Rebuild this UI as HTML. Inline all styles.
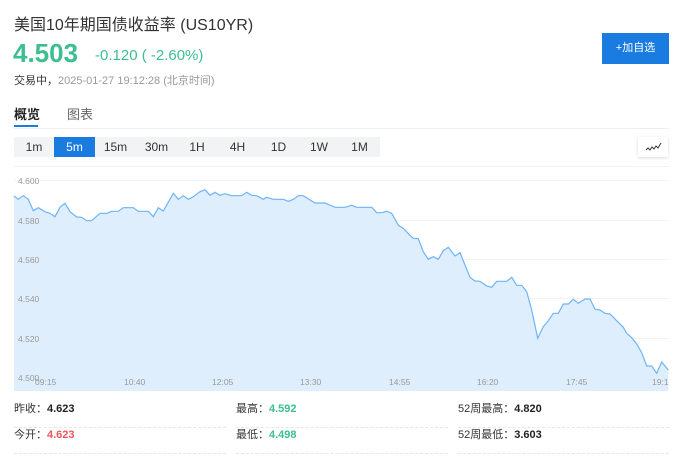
<!DOCTYPE html>
<html><head><meta charset="utf-8"><style>
*{margin:0;padding:0;box-sizing:border-box}
body{width:680px;height:459px;background:#fff;font-family:"Liberation Sans","Noto Sans CJK SC",sans-serif;position:relative;overflow:hidden;color:#333}
.a{position:absolute;white-space:nowrap}
.tb{position:absolute;top:137px;height:20px;font-size:12px;line-height:20px;text-align:center;color:#333}
.st{position:absolute;font-size:11px;height:26px;line-height:14px;border-bottom:1px dashed #e6e6e6}
.st b{color:#222}
</style></head><body>
<div class="a" style="left:14px;top:11px;font-size:16px;color:#333">美国10年期国债收益率 (US10YR)</div>
<div class="a" style="left:13px;top:38px;font-size:26px;font-weight:bold;color:#3bbf8f;line-height:30px">4.503</div>
<div class="a" style="left:95px;top:47px;font-size:15px;color:#3bbf8f">-0.120 ( -2.60%)</div>
<div class="a" style="left:14px;top:72px;font-size:11px;color:#999"><span style="color:#333">交易中，</span>2025-01-27 19:12:28 (北京时间)</div>
<div class="a" style="left:602px;top:33px;width:67px;height:31px;background:#1a7be0;color:#fff;font-size:11px;line-height:31px;text-align:center">+加自选</div>
<div class="a" style="left:14px;top:104px;font-size:13px;font-weight:bold;color:#222">概览</div>
<div class="a" style="left:67px;top:104px;font-size:13px;color:#666">图表</div>
<div class="a" style="left:14px;top:125px;width:24px;height:2px;background:#1a7be0"></div>
<div class="a" style="left:14px;top:128px;width:655px;height:1px;background:#eee"></div>
<div class="a" style="left:14px;top:137px;width:366px;height:20px;background:#f2f3f5"></div>
<div class="tb" style="left:14px;width:40px">1m</div>
<div class="tb" style="left:54px;width:41px;background:#1a7be0;color:#fff">5m</div>
<div class="tb" style="left:95px;width:41px">15m</div>
<div class="tb" style="left:136px;width:41px">30m</div>
<div class="tb" style="left:177px;width:40px">1H</div>
<div class="tb" style="left:217px;width:41px">4H</div>
<div class="tb" style="left:258px;width:41px">1D</div>
<div class="tb" style="left:299px;width:40px">1W</div>
<div class="tb" style="left:339px;width:41px">1M</div>
<div class="a" style="left:638px;top:137px;width:30px;height:20px;background:#fff;box-shadow:0 1px 3px rgba(0,0,0,.15)">
<svg width="30" height="20"><path d="M8 13 L10 11 L12 13 L14 10 L16 12 L18 9 L20 11 L23 6" fill="none" stroke="#333" stroke-width="1"/></svg></div>
<div class="a" style="left:14px;top:166px;width:655px;height:1px;background:#f0f0f0"></div>
<svg class="a" style="left:0;top:0" width="680" height="459">
<g stroke="#f3f3f3" stroke-width="1">
<line x1="14" y1="180.5" x2="669" y2="180.5"/><line x1="14" y1="220.5" x2="669" y2="220.5"/><line x1="14" y1="259.5" x2="669" y2="259.5"/><line x1="14" y1="298.5" x2="669" y2="298.5"/><line x1="14" y1="338.5" x2="669" y2="338.5"/>
</g>
<path d="M14 196 L18.3 199.3 L23.3 195.7 L28.3 199.3 L33.3 210.7 L38.3 207.7 L45 211.7 L50 213.3 L55 216.7 L60 207.3 L65 203.3 L70 211.7 L76.7 217 L81.7 217.3 L86.7 220.7 L91.7 220.7 L100 213.3 L106.7 213.3 L111.7 211.3 L118.3 211.3 L123.3 207.7 L133.3 207.7 L138.3 211.3 L148.3 211.3 L153.3 216.7 L158.3 207.7 L163.3 211 L173.3 193.3 L178.3 199.3 L183.3 195.7 L188.3 199.3 L193.3 196.7 L200 191.7 L205 189.7 L210 195.3 L215 192.3 L220 195.3 L225 193.7 L231.7 195.7 L241.7 195.7 L246.7 192.3 L251.7 195.3 L256.7 195.7 L263.3 199.3 L266.7 197.3 L273.3 199.3 L283.3 199.3 L288.3 201.3 L293.3 199.3 L298.3 195.7 L303.3 195.7 L315 203 L325 203 L335 207.3 L345 207.3 L351.7 205.3 L356.7 207.3 L371.7 207.3 L376.7 212.7 L381.7 212.7 L386.7 211.3 L391.7 213.3 L398.3 225.3 L403.3 228.3 L410 235.3 L413.3 238.3 L418.3 238.7 L423.3 251.7 L428.3 259.3 L433.3 256.7 L438.3 259.3 L443.3 250.7 L448.3 247.3 L455 256 L460 252.7 L465 265 L470 277.3 L475 281 L480 281.3 L486.7 286 L491.7 287.3 L496.7 281.3 L506.7 281.3 L511.7 277.3 L516.7 285.3 L521.7 285.3 L526.7 291.7 L531.7 310 L537.7 338.3 L543.3 326.7 L548.3 320.7 L553.3 313.3 L558.3 313.3 L563.3 304 L568.3 304 L573.3 299.3 L578.3 303.3 L585 299 L590 299 L595 309.3 L600 310 L605 313.3 L610 314 L616.7 320.7 L623.3 327.3 L626.7 333.3 L631.7 337.7 L636.7 344 L641.7 352.7 L646.7 366 L651.7 366 L656.7 373.3 L661.7 362 L668.3 370 L668.3 391 L14 391 Z" fill="#deeefd" stroke="none"/>
<path d="M14 196 L18.3 199.3 L23.3 195.7 L28.3 199.3 L33.3 210.7 L38.3 207.7 L45 211.7 L50 213.3 L55 216.7 L60 207.3 L65 203.3 L70 211.7 L76.7 217 L81.7 217.3 L86.7 220.7 L91.7 220.7 L100 213.3 L106.7 213.3 L111.7 211.3 L118.3 211.3 L123.3 207.7 L133.3 207.7 L138.3 211.3 L148.3 211.3 L153.3 216.7 L158.3 207.7 L163.3 211 L173.3 193.3 L178.3 199.3 L183.3 195.7 L188.3 199.3 L193.3 196.7 L200 191.7 L205 189.7 L210 195.3 L215 192.3 L220 195.3 L225 193.7 L231.7 195.7 L241.7 195.7 L246.7 192.3 L251.7 195.3 L256.7 195.7 L263.3 199.3 L266.7 197.3 L273.3 199.3 L283.3 199.3 L288.3 201.3 L293.3 199.3 L298.3 195.7 L303.3 195.7 L315 203 L325 203 L335 207.3 L345 207.3 L351.7 205.3 L356.7 207.3 L371.7 207.3 L376.7 212.7 L381.7 212.7 L386.7 211.3 L391.7 213.3 L398.3 225.3 L403.3 228.3 L410 235.3 L413.3 238.3 L418.3 238.7 L423.3 251.7 L428.3 259.3 L433.3 256.7 L438.3 259.3 L443.3 250.7 L448.3 247.3 L455 256 L460 252.7 L465 265 L470 277.3 L475 281 L480 281.3 L486.7 286 L491.7 287.3 L496.7 281.3 L506.7 281.3 L511.7 277.3 L516.7 285.3 L521.7 285.3 L526.7 291.7 L531.7 310 L537.7 338.3 L543.3 326.7 L548.3 320.7 L553.3 313.3 L558.3 313.3 L563.3 304 L568.3 304 L573.3 299.3 L578.3 303.3 L585 299 L590 299 L595 309.3 L600 310 L605 313.3 L610 314 L616.7 320.7 L623.3 327.3 L626.7 333.3 L631.7 337.7 L636.7 344 L641.7 352.7 L646.7 366 L651.7 366 L656.7 373.3 L661.7 362 L668.3 370" fill="none" stroke="#6eb4f7" stroke-width="1.2"/>
<g font-family="Liberation Sans" font-size="8.5" fill="#999">
<text x="18" y="184">4.600</text><text x="18" y="224">4.580</text><text x="18" y="263">4.560</text><text x="18" y="302">4.540</text><text x="18" y="342">4.520</text><text x="18" y="381">4.500</text>
<text x="35" y="385">09:15</text><text x="124" y="385">10:40</text><text x="212" y="385">12:05</text><text x="300" y="385">13:30</text><text x="389" y="385">14:55</text><text x="477" y="385">16:20</text><text x="566" y="385">17:45</text><text x="652" y="385">19:1</text>
</g>
</svg>
<div class="st" style="left:14px;top:402px;width:212px">昨收：<b>4.623</b></div>
<div class="st" style="left:236px;top:402px;width:212px">最高：<b style="color:#3bbf8f">4.592</b></div>
<div class="st" style="left:458px;top:402px;width:211px">52周最高：<b>4.820</b></div>
<div class="st" style="left:14px;top:428px;width:212px">今开：<b style="color:#f2545b">4.623</b></div>
<div class="st" style="left:236px;top:428px;width:212px">最低：<b style="color:#3bbf8f">4.498</b></div>
<div class="st" style="left:458px;top:428px;width:211px">52周最低：<b>3.603</b></div>
</body></html>
